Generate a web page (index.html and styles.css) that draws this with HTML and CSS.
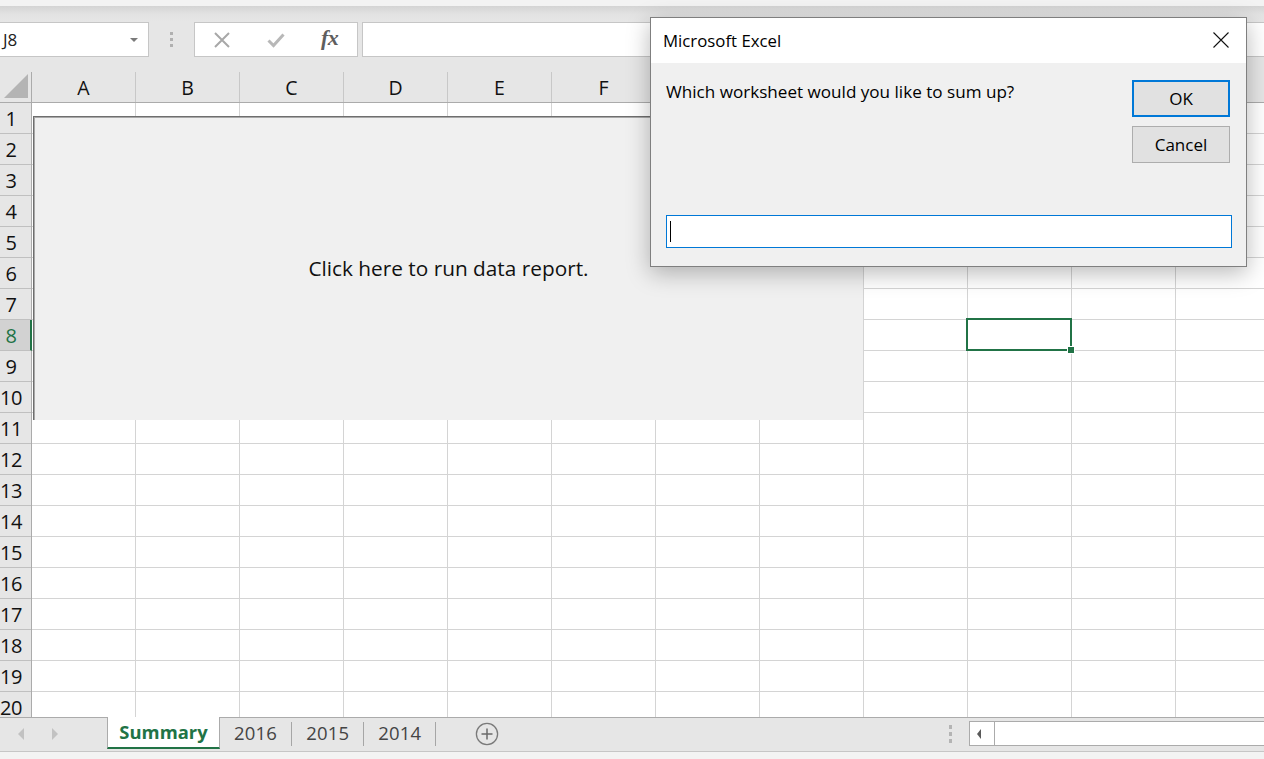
FILE: index.html
```html
<!DOCTYPE html>
<html lang="en">
<head>
<meta charset="utf-8">
<title>Microsoft Excel</title>
<link rel="stylesheet" href="styles.css">
</head>
<body>
<div class="app">
  <div class="topstrip"></div>
  <div class="formulabar">
    <div class="namebox"><span class="namebox-text">J8</span><span class="dropdown-arrow"></span></div>
    <div class="grip"><i></i><i></i><i></i></div>
    <div class="fxbox">
      <svg class="fx-cancel" width="16" height="16" viewBox="0 0 16 16"><path d="M1 1L15 15M15 1L1 15" stroke="#a8a8a8" stroke-width="2" fill="none"/></svg>
      <svg class="fx-enter" width="18" height="16" viewBox="0 0 18 16"><path d="M1.5 8.5L6.5 13.5L16.5 2.5" stroke="#b8b8b8" stroke-width="3" fill="none"/></svg>
      <span class="fx-label">fx</span>
    </div>
    <div class="formula-input"></div>
  </div>

  <div class="sheet">
    <div class="corner"><svg width="24" height="24" viewBox="0 0 24 24"><path d="M0 24H24V0Z" fill="#b4b4b4"/></svg></div>
    <div class="colheads">
      <div class="colhead">A</div><div class="colhead">B</div><div class="colhead">C</div><div class="colhead">D</div>
      <div class="colhead">E</div><div class="colhead">F</div><div class="colhead">G</div><div class="colhead">H</div>
      <div class="colhead">I</div><div class="colhead colhead-active">J</div><div class="colhead">K</div><div class="colhead">L</div>
    </div>
    <div class="rowheads">
      <div class="rowhead">1</div><div class="rowhead">2</div><div class="rowhead">3</div><div class="rowhead">4</div>
      <div class="rowhead">5</div><div class="rowhead">6</div><div class="rowhead">7</div><div class="rowhead rowhead-active">8</div>
      <div class="rowhead">9</div><div class="rowhead">10</div><div class="rowhead">11</div><div class="rowhead">12</div>
      <div class="rowhead">13</div><div class="rowhead">14</div><div class="rowhead">15</div><div class="rowhead">16</div>
      <div class="rowhead">17</div><div class="rowhead">18</div><div class="rowhead">19</div><div class="rowhead">20</div>
    </div>
    <div class="cells">
      <div class="shape-button">Click here to run data report.</div>
      <div class="selection"><span class="fill-handle"></span></div>
    </div>
  </div>

  <div class="tabbar">
    <div class="tabnav">
      <span class="nav-arrow nav-left"></span>
      <span class="nav-arrow nav-right"></span>
    </div>
    <div class="tab tab-active">Summary</div>
    <div class="tab">2016</div><span class="tabsep"></span>
    <div class="tab">2015</div><span class="tabsep"></span>
    <div class="tab">2014</div><span class="tabsep"></span>
    <div class="addsheet">
      <svg width="24" height="24" viewBox="0 0 24 24"><circle cx="12" cy="12" r="10.6" fill="none" stroke="#7a7a7a" stroke-width="1.3"/><path d="M12 6.5V17.5M6.5 12H17.5" stroke="#6a6a6a" stroke-width="1.5"/></svg>
    </div>
    <div class="hscroll-area">
      <div class="grip grip-small"><i></i><i></i><i></i></div>
      <div class="hscroll">
        <div class="hscroll-btn"><span class="hscroll-arrow"></span></div>
        <div class="hscroll-track"></div>
      </div>
    </div>
  </div>
  <div class="statusstrip"></div>
</div>

<div class="dialog">
  <div class="dlg-title">
    <span>Microsoft Excel</span>
    <svg class="dlg-close" width="16" height="16" viewBox="0 0 16 16"><path d="M0.5 0.5L15.5 15.5M15.5 0.5L0.5 15.5" stroke="#111" stroke-width="1.1" fill="none"/></svg>
  </div>
  <div class="dlg-body">
    <div class="dlg-top">
      <p class="dlg-msg">Which worksheet would you like to sum up?</p>
      <div class="dlg-btns">
        <button class="btn btn-default">OK</button>
        <button class="btn">Cancel</button>
      </div>
    </div>
    <div class="dlg-input"><span class="text-caret"></span></div>
  </div>
</div>
</body>
</html>
```

FILE: styles.css
```css
* { box-sizing: border-box; }

html, body {
  margin: 0;
  padding: 0;
}

body {
  width: 1264px;
  height: 759px;
  overflow: hidden;
  position: relative;
  background: #e6e6e6;
  font-family: "Open Sans", "Noto Sans", sans-serif;
  color: #000;
}

.app {
  display: flex;
  flex-direction: column;
  height: 759px;
}

.topstrip {
  height: 6px;
  background: #f3f3f3;
  flex: none;
}

/* ---------- formula bar ---------- */
.formulabar {
  height: 66px;
  flex: none;
  display: flex;
  align-items: flex-start;
  padding-top: 16px;
  background: linear-gradient(#d4d4d4 0, #e2e2e2 8px, #e6e6e6 16px);
}

.namebox {
  width: 149px;
  height: 35px;
  background: #fff;
  border: 1px solid #c6c6c6;
  border-left: none;
  display: flex;
  align-items: center;
  justify-content: space-between;
  padding: 0 10px 0 3px;
  font-size: 17px;
  color: #222;
}

.dropdown-arrow {
  width: 0;
  height: 0;
  border-left: 4px solid transparent;
  border-right: 4px solid transparent;
  border-top: 4px solid #7a7a7a;
}

.grip {
  width: 45px;
  height: 35px;
  display: flex;
  flex-direction: column;
  align-items: center;
  justify-content: center;
  gap: 3px;
}

.grip i {
  display: block;
  width: 3px;
  height: 3px;
  background: #b0b0b0;
}

.fxbox {
  width: 164px;
  height: 35px;
  background: #fff;
  border: 1px solid #c6c6c6;
  display: flex;
  align-items: center;
  padding-left: 19px;
}

.fx-cancel { margin-right: 37px; }
.fx-enter { margin-right: 36px; }

.fx-label {
  font-family: "Liberation Serif", "DejaVu Serif", serif;
  font-style: italic;
  font-weight: 700;
  font-size: 22px;
  color: #5e5e5e;
  letter-spacing: -0.5px;
  line-height: 1;
  margin-top: -3px;
}

.formula-input {
  flex: 1;
  height: 35px;
  margin-left: 4px;
  background: #fff;
  border: 1px solid #c6c6c6;
  border-right: none;
}

/* ---------- sheet ---------- */
.sheet {
  flex: 1;
  min-height: 0;
  overflow: hidden;
  display: grid;
  grid-template-columns: 32px 1fr;
  grid-template-rows: 31px 1fr;
  background: #fff;
}

.corner {
  background: #e6e6e6;
  border-right: 1px solid #ababab;
  border-bottom: 1px solid #ababab;
  display: flex;
  align-items: flex-end;
  justify-content: flex-end;
  padding: 0 3px 4px 0;
}

.colheads {
  display: flex;
  background: #e6e6e6;
  border-bottom: 1px solid #ababab;
  overflow: hidden;
}

.colhead {
  flex: none;
  width: 104px;
  border-right: 1px solid #c8c8c8;
  text-align: center;
  font-size: 19.5px;
  line-height: 30px;
  padding-top: 1px;
  color: #111;
}

.colhead-active {
  background: #d2d2d2;
  color: #217346;
}

.rowheads {
  display: flex;
  flex-direction: column;
  background: #e6e6e6;
  border-right: 1px solid #ababab;
  min-height: 0;
}

.rowhead {
  flex: none;
  width: 31px;
  height: 31px;
  border-bottom: 1px solid #c0c0c0;
  font-size: 20px;
  line-height: 30px;
  padding-top: 1px;
  text-align: center;
  color: #111;
  padding-right: 9px;
  letter-spacing: -0.4px;
}

.rowhead-active {
  width: 32px;
  margin-right: -1px;
  background: #d2d2d2;
  color: #217346;
  padding-right: 8px;
  border-right: 2px solid #217346;
}

.cells {
  position: relative;
  background-color: #fff;
  background-image:
    repeating-linear-gradient(to right, transparent 0 103px, #d4d4d4 103px 104px),
    repeating-linear-gradient(to bottom, transparent 0 30px, #d4d4d4 30px 31px);
}

.shape-button {
  position: absolute;
  left: 1px;
  top: 13px;
  width: 830px;
  height: 304px;
  background: #f0f0f0;
  border-top: 1px solid #6e6e6e;
  border-left: 1px solid #6e6e6e;
  box-shadow: inset 1px 1px 0 #a8a8a8;
  display: flex;
  align-items: center;
  justify-content: center;
  font-size: 20.8px;
  color: #111;
  padding-bottom: 1px;
}

.selection {
  position: absolute;
  left: 934px;
  top: 215px;
  width: 106px;
  height: 33px;
  border: 2px solid #217346;
}

.fill-handle {
  position: absolute;
  right: -5px;
  bottom: -5px;
  width: 8px;
  height: 8px;
  background: #217346;
  border: 1px solid #fff;
}

/* ---------- sheet tabs ---------- */
.tabbar {
  flex: none;
  height: 35px;
  display: flex;
  align-items: flex-start;
  background: #e6e6e6;
  border-top: 1px solid #ababab;
  border-bottom: 1px solid #c6c6c6;
}

.tabnav {
  width: 107px;
  height: 31px;
  display: flex;
  align-items: center;
  padding-left: 18px;
  gap: 28px;
}

.nav-arrow {
  width: 0;
  height: 0;
  border-top: 6px solid transparent;
  border-bottom: 6px solid transparent;
}

.nav-left { border-right: 6px solid #c2c2c2; }
.nav-right { border-left: 6px solid #c2c2c2; }

.tab {
  height: 31px;
  display: flex;
  align-items: center;
  padding: 0 14px 3px 14px;
  font-size: 18.5px;
  color: #444;
  letter-spacing: 0.2px;
}

.tab-active {
  width: 113px;
  justify-content: center;
  padding: 0 0 1px 0;
  margin-top: -1px;
  height: 32px;
  background: #fff;
  border-left: 1px solid #ababab;
  border-right: 1px solid #ababab;
  border-bottom: 2px solid #217346;
  color: #217346;
  font-weight: 700;
  font-size: 18.4px;
  letter-spacing: 0;
}

.tabsep {
  width: 1px;
  height: 24px;
  margin-top: 4px;
  background: #a6a6a6;
}

.addsheet {
  margin-left: 39px;
  margin-top: 4px;
  height: 24px;
}

.addsheet svg { display: block; }

.hscroll-area {
  margin-left: auto;
  width: 324px;
  display: flex;
  align-items: flex-start;
}

.grip-small {
  width: 20px;
  height: 31px;
  gap: 3px;
}

.grip-small i {
  width: 3px;
  height: 4px;
  background: #b4b4b4;
}

.hscroll {
  flex: 1;
  height: 25px;
  margin-top: 3px;
  margin-left: 9px;
  display: flex;
  background: #fff;
  border: 1px solid #ababab;
  border-right: none;
}

.hscroll-btn {
  width: 25px;
  border-right: 1px solid #ababab;
  display: flex;
  align-items: center;
  padding-left: 7px;
}

.hscroll-arrow {
  width: 0;
  height: 0;
  border-top: 5px solid transparent;
  border-bottom: 5px solid transparent;
  border-right: 4px solid #5a5a5a;
}

.hscroll-track { flex: 1; }

.statusstrip {
  flex: none;
  height: 7px;
  background: #f3f3f3;
}

/* ---------- dialog ---------- */
.dialog {
  position: absolute;
  left: 650px;
  top: 17px;
  width: 597px;
  height: 250px;
  border: 1px solid #7f7f7f;
  background: #f0f0f0;
  display: flex;
  flex-direction: column;
  box-shadow: 0 6px 22px rgba(0, 0, 0, 0.28);
}

.dlg-title {
  height: 45px;
  flex: none;
  background: #fff;
  display: flex;
  align-items: center;
  justify-content: space-between;
  padding: 0 17px 0 12px;
  font-size: 16.8px;
  color: #000;
}

.dlg-close { margin-top: -1px; }

.dlg-body {
  flex: 1;
  display: flex;
  flex-direction: column;
  padding: 17px 15px 18px 15px;
}

.dlg-top {
  display: flex;
  justify-content: space-between;
  align-items: flex-start;
}

.dlg-msg {
  margin: 0;
  font-size: 17.1px;
  line-height: 24px;
  color: #000;
}

.dlg-btns {
  display: flex;
  flex-direction: column;
  gap: 9px;
  margin-right: 1px;
}

.btn {
  width: 98px;
  height: 37px;
  background: #e1e1e1;
  border: 1px solid #adadad;
  font-family: "Open Sans", "Noto Sans", sans-serif;
  font-size: 17px;
  color: #000;
  padding: 0;
}

.btn-default {
  border: 2px solid #0078d7;
}

.dlg-input {
  margin-top: auto;
  width: 566px;
  height: 33px;
  background: #fff;
  border: 1px solid #0078d7;
  display: flex;
  align-items: center;
  padding-left: 3px;
}

.text-caret {
  width: 1px;
  height: 21px;
  background: #000;
}
```
